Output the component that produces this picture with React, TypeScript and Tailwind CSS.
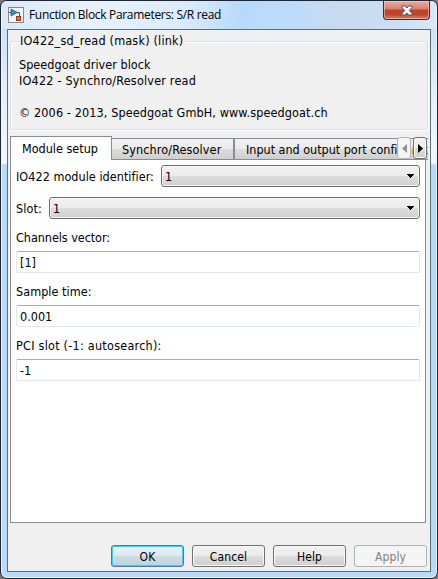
import React from "react";

const Arrow = () => (
  <svg width="7" height="4" viewBox="0 0 7 4" className="shrink-0" shapeRendering="crispEdges">
    <path d="M0 0h7v1h-1v1h-1v1h-1v1h-1v-1h-1v-1h-1v-1h-1z" fill="#000" />
  </svg>
);

const Select = ({ value }: { value: string }) => (
  <div className="flex h-[22px] flex-1 items-center justify-between rounded-[3px] border border-[#707070] bg-[linear-gradient(#f2f2f2_0%,#ebebeb_48%,#dddddd_52%,#cfcfcf_100%)] pl-[3px] pr-[5px] shadow-[inset_0_0_0_1px_#f5f5f5]">
    <span className="relative top-[1px]">{value}</span>
    <Arrow />
  </div>
);

const Field = ({ label, value, tracking }: { label: string; value: string; tracking: string }) => (
  <div className="flex h-[54px] flex-col">
    <div className={"h-[21px] leading-[16px] whitespace-nowrap " + tracking}>{label}</div>
    <div className="flex h-[22px] items-center rounded-[2px] border border-[#e2e6ee] border-t-[#abadb3] bg-white pl-[3px]">
      <span className="relative top-[1px]">{value}</span>
    </div>
  </div>
);

const buttonBase =
  "flex h-[22px] w-[73px] items-center justify-center rounded-[3px] border text-[12px] tracking-[0.15px] pt-[1px] ";
const plain =
  "border-[#707070] bg-[linear-gradient(#f2f2f2_0%,#ebebeb_50%,#dddddd_50%,#cfcfcf_100%)] shadow-[inset_0_0_0_1px_#fafafa]";

export default function App() {
  return (
    <div className="h-[579px] w-[438px] overflow-hidden bg-[#77777c] font-['DejaVu_Sans_Condensed','DejaVu_Sans',sans-serif] text-[12.5px] leading-[16px] text-black [font-stretch:condensed]">
      <div className="flex h-[579px] w-[438px] flex-col rounded-[7px] border border-[#202532] bg-[linear-gradient(#bcdcfc_0,#e3effb_90px,#f2f8fe_162px,#b9d9f9_164px,#b9d9f9_100%)] px-[5px] pb-[6px] shadow-[inset_0_0_0_1px_#e9f5ff]">
        <div className="-mx-[4px] flex h-[28px] shrink-0 items-start justify-between rounded-t-[5px] bg-[linear-gradient(100deg,#d9e9f8_0%,#e8f2fc_20%,#dcecfc_42%,#b8dafa_55%,#bddcfb_68%,#c8daef_76%,#c9dcf3_88%,#d8e8f9_100%)] pl-[6px] pr-[6px]">
          <div className="flex items-center pt-[6px]">
            <svg width="16" height="16" viewBox="0 0 16 16">
              <rect x=".5" y=".5" width="15" height="15" fill="#f4f4f2" stroke="#85888c" />
              <path d="M1 5.500h2M9 5.500h2.500v4" fill="none" stroke="#345369" />
              <path d="M3 2l6.500 3.500L3 9z" fill="#2797c9" stroke="#225572" strokeWidth=".7" />
              <rect x="8.500" y="9.500" width="4" height="4" fill="#e66b41" stroke="#963613" />
            </svg>
            <span className="ml-[5px] whitespace-nowrap font-['Open_Sans','Noto_Sans',sans-serif] text-[12px] leading-[16px] tracking-[-0.32px] [font-stretch:normal]">
              Function Block Parameters: S/R read
            </span>
          </div>
          <div className="flex h-[19px] w-[47px] items-center justify-center rounded-b-[4px] border border-t-0 border-[#50232a] bg-[linear-gradient(#e8aca3_0%,#d97e70_45%,#c0402b_50%,#bd4630_75%,#d9836c_100%)] shadow-[inset_0_0_0_1px_rgba(255,220,210,0.5)]">
            <svg width="12" height="11" viewBox="0 0 12 11">
              <path d="M1 1h3.300L6 3l1.700-2H11v1.500L8.300 5.500 11 8.500V10H7.700L6 8l-1.700 2H1V8.500l2.700-3L1 2.500z" fill="#fff" stroke="#535666" />
            </svg>
          </div>
        </div>

        <div className="flex h-[543px] w-[424px] shrink-0 flex-col self-center border border-[#5c6f7d] bg-[#f0f0f0] px-[2px]">
          <div className="mt-[11px] h-[89px] w-[418px] rounded-[3px] border border-[#d5dfe5] shadow-[inset_1px_1px_0_#fff,1px_1px_0_#fff]">
            <div className="-mt-[9px] ml-[7px] flex">
              <span className="bg-[#f0f0f0] px-[2px] tracking-[0.2px] whitespace-nowrap">IO422_sd_read (mask) (link)</span>
            </div>
            <div className="mt-[8px] ml-[8px] whitespace-nowrap">
              <div className="tracking-[0.04px]">Speedgoat driver block</div>
              <div className="tracking-[0.2px]">IO422 - Synchro/Resolver read</div>
              <div className="mt-[16px] tracking-[0.12px]">© 2006 - 2013, Speedgoat GmbH, www.speedgoat.ch</div>
            </div>
          </div>

          <div className="relative mt-[6px] flex h-[24px] w-[418px] shrink-0 items-end overflow-hidden whitespace-nowrap">
            <div className="z-10 flex h-[24px] w-[102px] shrink-0 items-center border border-b-0 border-[#898c95] bg-white pl-[11px]">
              Module setup
            </div>
            <div className="flex h-[22px] w-[122px] shrink-0 items-center border border-l-0 border-[#898c95] bg-[linear-gradient(#f2f2f2_0%,#ebebeb_50%,#dddddd_50%,#cfcfcf_100%)] pt-[1px] pl-[10px] tracking-[0.12px]">
              Synchro/Resolver
            </div>
            <div className="flex h-[22px] w-[194px] shrink-0 items-center overflow-hidden border border-r-0 border-[#898c95] bg-[linear-gradient(#f2f2f2_0%,#ebebeb_50%,#dddddd_50%,#cfcfcf_100%)] pt-[1px] pl-[11px] tracking-[-0.02px]">
              Input and output port configuration
            </div>
            <div className="absolute top-[1px] right-[1px] z-20 flex gap-[2px]">
              <div className="flex h-[22px] w-[14px] items-center justify-center rounded-[3px] border border-[#b5b5b5] bg-[#f4f4f4]">
                <svg width="5" height="9" viewBox="0 0 5 9"><path d="M5 0v9L0 4.500z" fill="#929292" /></svg>
              </div>
              <div className={"flex h-[22px] w-[14px] items-center justify-center rounded-[3px] border " + plain}>
                <svg width="5" height="9" viewBox="0 0 5 9"><path d="M0 0v9l5-4.500z" fill="#000" /></svg>
              </div>
            </div>
          </div>

          <div className="flex h-[363px] w-[416px] shrink-0 flex-col border border-t-0 border-[#898c95] bg-white px-[5px] pt-[5px]">
            <div className="flex h-[32px] items-start">
              <span className="w-[145px] pt-[4px] tracking-[0.04px] whitespace-nowrap">IO422 module identifier:</span>
              <Select value="1" />
            </div>
            <div className="flex h-[33px] items-start">
              <span className="w-[33px] pt-[4px] tracking-[0.1px] whitespace-nowrap">Slot:</span>
              <Select value="1" />
            </div>
            <Field label="Channels vector:" value="[1]" tracking="tracking-[-0.05px]" />
            <Field label="Sample time:" value="0.001" tracking="tracking-[0.05px]" />
            <Field label="PCI slot (-1: autosearch):" value="-1" tracking="tracking-[0.25px]" />
          </div>

          <div className="mt-[22px] flex w-[417px] justify-end gap-[8px]">
            <div className={buttonBase + "border-[#3c7fb1] bg-[linear-gradient(#eaf3f7_0%,#dce9ef_50%,#cbdde5_50%,#bfd2da_100%)] shadow-[inset_0_0_0_1px_#42cff5]"}>OK</div>
            <div className={buttonBase + plain}>Cancel</div>
            <div className={buttonBase + plain}>Help</div>
            <div className={buttonBase + "border-[#adb2b5] bg-[#f4f4f4] text-[#838383]"}>Apply</div>
          </div>
        </div>
      </div>
    </div>
  );
}
